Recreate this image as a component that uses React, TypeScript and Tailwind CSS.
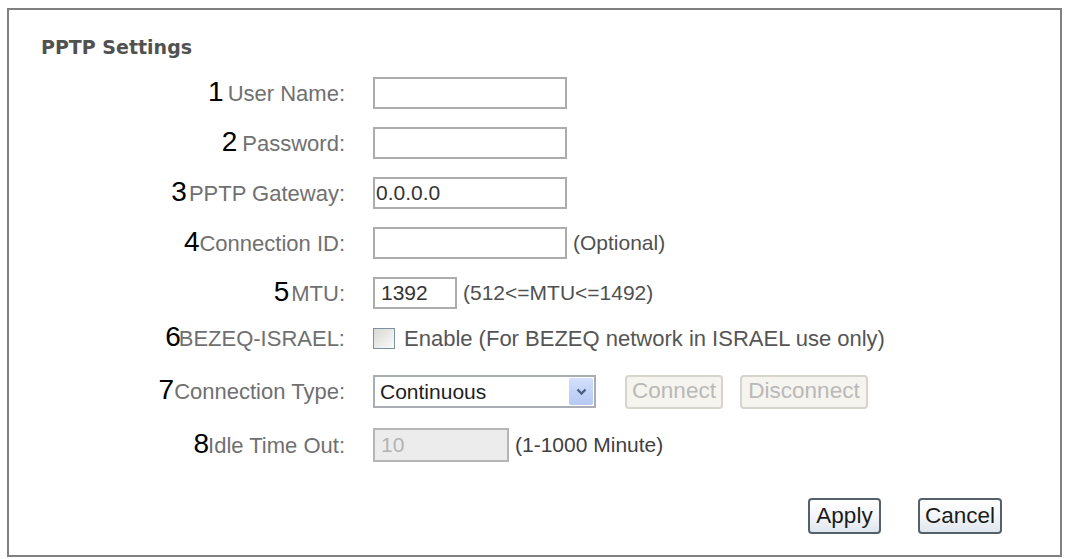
import React from 'react';

type Row = {
    n: string;
    label: string;
    gap: string;
    height: string;
    field: React.ReactNode;
};

const inputBox = 'h-[32px] border-2 border-[#acacac] bg-white pl-[1px] text-[21px] text-[#333] outline-none';

const XpButton: React.FC<{ label: string; width: string }> = ({ label, width }) => (
    <button
        className={`h-[36px] ${width} rounded-[4px] border-2 border-[#56606b] bg-gradient-to-b from-white via-[#f4f6f9] to-[#dfe6ee] text-[22.5px] leading-none text-[#1b1b1b]`}
    >
        {label}
    </button>
);

const DisabledButton: React.FC<{ label: string; width: string }> = ({ label, width }) => (
    <button
        disabled
        className={`h-[34px] ${width} rounded-[4px] border-2 border-[#d6d4cc] bg-[#f5f4ef] text-[22.5px] leading-none text-[#b9b9b9]`}
    >
        {label}
    </button>
);

const rows: Row[] = [
    {
        n: '1',
        label: 'User Name:',
        gap: 'mr-1',
        height: 'h-[50px]',
        field: <input readOnly className={`${inputBox} w-[194px]`} defaultValue="" />,
    },
    {
        n: '2',
        label: 'Password:',
        gap: 'mr-[5px]',
        height: 'h-[50px]',
        field: <input readOnly type="password" className={`${inputBox} w-[194px]`} defaultValue="" />,
    },
    {
        n: '3',
        label: 'PPTP Gateway:',
        gap: 'mr-0.5',
        height: 'h-[50px]',
        field: <input readOnly className={`${inputBox} w-[194px]`} defaultValue="0.0.0.0" />,
    },
    {
        n: '4',
        label: 'Connection ID:',
        gap: 'mr-0',
        height: 'h-[50px]',
        field: (
            <div className="flex items-center gap-[6px]">
                <input readOnly className={`${inputBox} w-[194px]`} defaultValue="" />
                <span className="text-[21px] text-[#505050]">(Optional)</span>
            </div>
        ),
    },
    {
        n: '5',
        label: 'MTU:',
        gap: 'mr-0.5',
        height: 'h-[50px]',
        field: (
            <div className="flex items-center gap-[6px]">
                <input readOnly className={`${inputBox} w-[84px] pl-[6px] text-[#222]`} defaultValue="1392" />
                <span className="text-[21px] text-[#505050]">(512&lt;=MTU&lt;=1492)</span>
            </div>
        ),
    },
    {
        n: '6',
        label: 'BEZEQ-ISRAEL:',
        gap: '-mr-0.5',
        height: 'h-[40px]',
        field: (
            <div className="flex items-center gap-[9px]">
                <span className="h-[21px] w-[22px] border border-[#8090a4] bg-gradient-to-br from-[#d8d8d4] to-[#fbfbfb]" />
                <span className="text-[22px] text-[#555]">Enable (For BEZEQ network in ISRAEL use only)</span>
            </div>
        ),
    },
    {
        n: '7',
        label: 'Connection Type:',
        gap: 'mr-0',
        height: 'h-[67px]',
        field: (
            <div className="flex items-center">
                <div className="flex h-[33px] w-[223px] items-center justify-between border-2 border-[#a9aeb5] bg-white">
                    <span className="pl-[5px] text-[21px] text-[#1e1e1e]">Continuous</span>
                    <span className="mr-[1px] flex h-[27px] w-[24px] items-center justify-center rounded-[2px] bg-gradient-to-b from-[#d3e0fb] to-[#b4c8f3]">
                        <svg width="11" height="8" viewBox="0 0 11 8">
                            <path d="M1.5 1.5 L5.5 5.5 L9.5 1.5" fill="none" stroke="#4a5f86" strokeWidth="2.4" />
                        </svg>
                    </span>
                </div>
                <div className="ml-[29px] flex items-center gap-[17px]">
                    <DisabledButton label="Connect" width="w-[98px]" />
                    <DisabledButton label="Disconnect" width="w-[128px]" />
                </div>
            </div>
        ),
    },
    {
        n: '8',
        label: 'Idle Time Out:',
        gap: '-mr-px',
        height: 'h-[40px]',
        field: (
            <div className="flex items-center gap-[6px]">
                <input
                    readOnly
                    disabled
                    className="h-[34px] w-[136px] border-2 border-[#b5b5b5] bg-[#ececec] pl-[6px] text-[21px] text-[#b3b3b3]"
                    defaultValue="10"
                />
                <span className="text-[21px] text-[#3f3f3f]">(1-1000 Minute)</span>
            </div>
        ),
    },
];

export default function App() {
    return (
        <div className="min-h-screen bg-white pl-[7px] pt-[8px] font-['Liberation_Sans',Arial,sans-serif]">
            <div className="flex h-[549px] w-[1055px] flex-col border-2 border-[#808080]">
                <h1 className="ml-[32px] mt-[26px] font-['DejaVu_Sans',Verdana,sans-serif] text-[19px] font-bold leading-[22px] text-[#515151]">
                    PPTP Settings
                </h1>

                <div className="mt-[10px] flex flex-col">
                    {rows.map((row) => (
                        <div key={row.n} className={`flex items-center ${row.height}`}>
                            <div className="flex w-[336px] items-baseline justify-end">
                                <span className={`text-[28px] leading-none text-black ${row.gap}`}>{row.n}</span>
                                <span className="text-[22px] text-[#707070]">{row.label}</span>
                            </div>
                            <div className="ml-[28px]">{row.field}</div>
                        </div>
                    ))}
                </div>

                <div className="mt-[33px] flex justify-end gap-[37px] pr-[58px]">
                    <XpButton label="Apply" width="w-[73px]" />
                    <XpButton label="Cancel" width="w-[84px]" />
                </div>
            </div>
        </div>
    );
}
